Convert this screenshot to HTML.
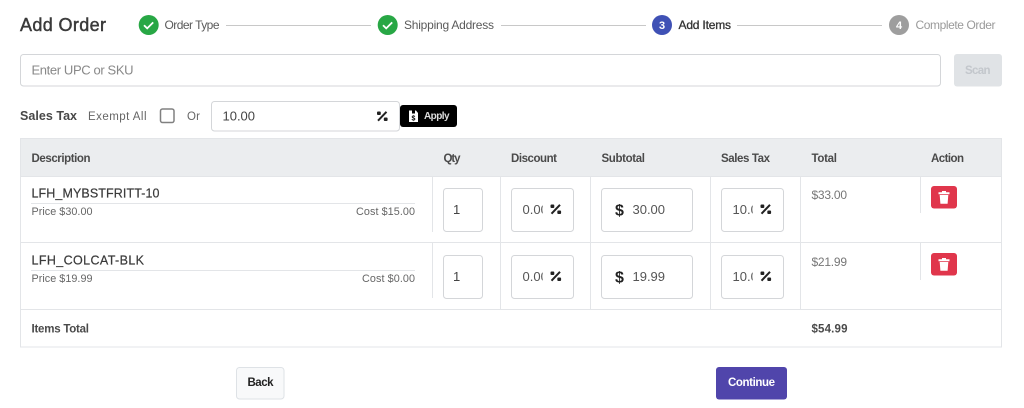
<!DOCTYPE html>
<html lang="en"><head><meta charset="utf-8"><title>Add Order</title>
<style>
html,body{margin:0;padding:0;background:#fff;width:1024px;height:408px;overflow:hidden}
svg{display:block;filter:blur(.3px)}
text{font-family:"Liberation Sans",sans-serif;white-space:pre}
.b{font-weight:bold}
.th{font-size:11.5px;font-weight:bold;fill:#4a4a4a}
.st{font-size:12px;fill:#5a5a5a}
.sm{font-size:10.8px;fill:#666}
.v{font-size:13px;fill:#555}
.tot{font-size:12px;fill:#777}
.sku{font-size:12.5px;fill:#3a3a3a;stroke:#3a3a3a;stroke-width:.2}
.box{fill:#fff;stroke:#d4d6d9;stroke-width:1}
.ln{stroke:#e3e5e8;stroke-width:1}
</style></head><body>
<svg width="1024" height="408" viewBox="0 0 1024 408" xmlns="http://www.w3.org/2000/svg">
<defs>
<clipPath id="c1"><rect x="515" y="190" width="27.700" height="40"/></clipPath>
<clipPath id="c2"><rect x="725" y="190" width="27.700" height="40"/></clipPath>
<clipPath id="c3"><rect x="515" y="257" width="27.700" height="40"/></clipPath>
<clipPath id="c4"><rect x="725" y="257" width="27.700" height="40"/></clipPath>
<g id="pct"><path d="M1 9.700 9.500 .8" stroke="#222" stroke-width="2" fill="none"/><rect x="0" y=".5" width="3.800" height="3.500" rx="1" fill="#222"/><rect x="6.800" y="6.500" width="3.800" height="3.500" rx="1" fill="#222"/></g>
<g id="trash"><rect width="26" height="22.500" rx="3" fill="#e0364c"/><path d="M7.500 6.300h11v2h-11zM11 5h4v1.500h-4z" fill="#fff"/><path d="M8.700 9h8.600l-.7 8.700H9.400z" fill="#fff"/></g>
</defs>
<rect width="1024" height="408" fill="#fff"/>

<!-- Title and stepper -->
<text x="20" y="31" font-size="18" fill="#3a3a3a" stroke="#3a3a3a" stroke-width=".45" textLength="86">Add Order</text>
<circle cx="148.700" cy="25" r="10" fill="#28a745"/><path d="M144 25.200l3.200 3.200 6-6" fill="none" stroke="#fff" stroke-width="1.800"/>
<text class="st" x="164.500" y="29" textLength="55">Order Type</text>
<path d="M226 25.500H371" stroke="#c8c8c8"/>
<circle cx="387.700" cy="25" r="10" fill="#28a745"/><path d="M383 25.200l3.200 3.200 6-6" fill="none" stroke="#fff" stroke-width="1.800"/>
<text class="st" x="404" y="29" textLength="90">Shipping Address</text>
<path d="M501 25.500H646" stroke="#c8c8c8"/>
<circle cx="662" cy="25" r="10" fill="#3f51b5"/>
<text x="662" y="29" font-size="11" fill="#fff" text-anchor="middle" class="b">3</text>
<text x="678.500" y="29" font-size="12" fill="#333" stroke="#333" stroke-width=".3" textLength="52.500">Add Items</text>
<path d="M737 25.500H882" stroke="#c8c8c8"/>
<circle cx="899" cy="25" r="10" fill="#9e9e9e"/>
<text x="899" y="29" font-size="11" fill="#fff" text-anchor="middle" class="b">4</text>
<text x="915.500" y="29" font-size="12" fill="#9a9a9a" textLength="80">Complete Order</text>

<!-- Search row -->
<rect class="box" x="20.500" y="54.500" width="920" height="31.500" rx="3"/>
<text x="31.500" y="74.500" font-size="13" fill="#888" textLength="102">Enter UPC or SKU</text>
<rect x="954" y="54" width="48" height="32.500" rx="3" fill="#e0e3e6"/>
<text x="965" y="74" font-size="11.500" class="b" fill="#c3c7cc" textLength="25.500">Scan</text>

<!-- Sales tax row -->
<text x="20" y="120" font-size="12.500" class="b" fill="#484848" textLength="57">Sales Tax</text>
<text x="88" y="120" font-size="11.500" fill="#666" textLength="58.500">Exempt All</text>
<rect x="160.500" y="109" width="13.500" height="13.500" rx="2" fill="#fff" stroke="#808080" stroke-width="1.500"/>
<text x="187" y="120" font-size="11.500" fill="#666" textLength="13">Or</text>
<rect class="box" x="211.500" y="101.500" width="188" height="29.500" rx="3"/>
<text x="222.500" y="120.500" font-size="13" fill="#444" textLength="32.500">10.00</text>
<use href="#pct" x="377" y="111"/>
<rect x="400" y="105" width="57" height="22" rx="3" fill="#000"/>
<path d="M409 110.500h3v3h3v-3h1l2 2.500v9h-9z" fill="#fff"/>
<text x="411.500" y="120.500" font-size="7" class="b" fill="#000">$</text>
<text x="424" y="119" font-size="10" class="b" fill="#ddd" textLength="25.500">Apply</text>

<!-- Table -->
<rect x="20.500" y="138.500" width="981" height="208.500" fill="#fff" stroke="#e3e5e8"/>
<rect x="21" y="139" width="980" height="37.500" fill="#ebedef"/>
<path class="ln" d="M20 176.500H1002M20 242.500H1002M20 309.500H1002M20 138.500H1002"/>
<text class="th" x="31.500" y="162" textLength="59">Description</text>
<text class="th" x="443.500" y="162" textLength="17">Qty</text>
<text class="th" x="511" y="162" textLength="46">Discount</text>
<text class="th" x="601.500" y="162" textLength="43.500">Subtotal</text>
<text class="th" x="721" y="162" textLength="49">Sales Tax</text>
<text class="th" x="811.500" y="162" textLength="25.500">Total</text>
<text class="th" x="931" y="162" textLength="33">Action</text>

<path class="ln" d="M432.500 177V232M432.500 243V298M500.500 177V309M590.500 177V309M710.500 177V309M800.500 177V309M920.500 177V213M920.500 243V280"/>

<!-- Row 1 -->
<text class="sku" x="31.500" y="197.300" textLength="128">LFH_MYBSTFRITT-10</text>
<path class="ln" d="M31 203.500H415"/>
<text class="sm" x="31.500" y="215" textLength="61">Price $30.00</text>
<text class="sm" x="356" y="215" textLength="59">Cost $15.00</text>
<rect class="box" x="443.500" y="188.500" width="39" height="43" rx="3"/>
<text class="v" x="453" y="214" style="fill:#444">1</text>
<rect class="box" x="511.500" y="188.500" width="62" height="43" rx="3"/>
<text class="v" x="522.500" y="214" clip-path="url(#c1)">0.00</text>
<use href="#pct" x="550.500" y="204"/>
<rect class="box" x="601.500" y="188.500" width="91" height="43" rx="3"/>
<text x="615" y="215.500" font-size="16" class="b" fill="#222">$</text>
<text class="v" x="632.500" y="214" textLength="32.500">30.00</text>
<rect class="box" x="721.500" y="188.500" width="62" height="43" rx="3"/>
<text class="v" x="732.500" y="214" clip-path="url(#c2)">10.00</text>
<use href="#pct" x="760.500" y="204"/>
<text class="tot" x="811.500" y="199" textLength="35.500">$33.00</text>
<use href="#trash" x="931" y="186"/>

<!-- Row 2 -->
<text class="sku" x="31.500" y="264.300" textLength="112.500">LFH_COLCAT-BLK</text>
<path class="ln" d="M31 270.500H415"/>
<text class="sm" x="31.500" y="282" textLength="61">Price $19.99</text>
<text class="sm" x="362" y="282" textLength="53">Cost $0.00</text>
<rect class="box" x="443.500" y="255.500" width="39" height="43" rx="3"/>
<text class="v" x="453" y="281" style="fill:#444">1</text>
<rect class="box" x="511.500" y="255.500" width="62" height="43" rx="3"/>
<text class="v" x="522.500" y="281" clip-path="url(#c3)">0.00</text>
<use href="#pct" x="550.500" y="271"/>
<rect class="box" x="601.500" y="255.500" width="91" height="43" rx="3"/>
<text x="615" y="282.500" font-size="16" class="b" fill="#222">$</text>
<text class="v" x="632.500" y="281" textLength="32.500">19.99</text>
<rect class="box" x="721.500" y="255.500" width="62" height="43" rx="3"/>
<text class="v" x="732.500" y="281" clip-path="url(#c4)">10.00</text>
<use href="#pct" x="760.500" y="271"/>
<text class="tot" x="811.500" y="266" textLength="35.500">$21.99</text>
<use href="#trash" x="931" y="253"/>

<!-- Totals -->
<text class="th" x="31.500" y="332.700" textLength="57.500">Items Total</text>
<text class="th" x="811.500" y="332.700" textLength="36">$54.99</text>

<!-- Footer buttons -->
<rect x="236.500" y="367.500" width="47.500" height="31.500" rx="3" fill="#f8f9fa" stroke="#dee2e6"/>
<text x="247.500" y="386" font-size="11.500" class="b" fill="#222" textLength="26">Back</text>
<rect x="716" y="367" width="71" height="32.500" rx="3" fill="#5045ab"/>
<text x="728" y="386" font-size="11.500" class="b" fill="#fff" textLength="47">Continue</text>
</svg>
</body></html>
